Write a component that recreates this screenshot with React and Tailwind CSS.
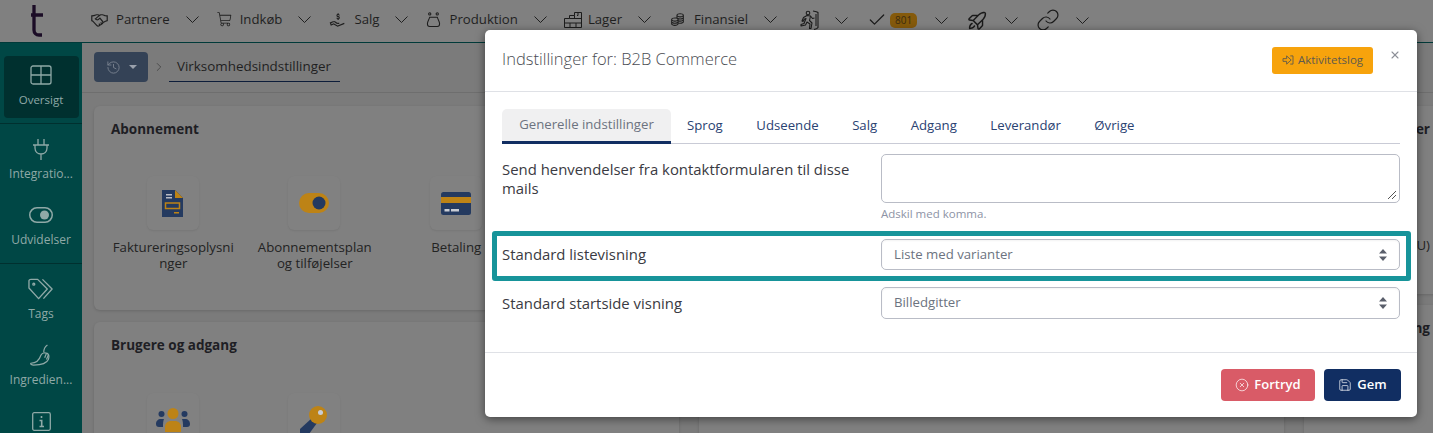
import React from 'react';
import { ChevronRight, Check, Link, History, Save, CircleX, X } from 'lucide-react';
import { LiaHandshake, LiaHandHoldingUsdSolid, LiaCoinsSolid } from 'react-icons/lia';
import { PiShoppingCartLight, PiRocketLaunch } from 'react-icons/pi';

const sans = 'font-["Open_Sans",sans-serif]';

const Pot = () => (
  <svg viewBox="0 0 16 17" className="w-[15px] h-[16px]" fill="none" stroke="#1c1c1c" strokeWidth="1.100">
    <circle cx="4" cy="2" r="1.200" />
    <circle cx="12" cy="2" r="1.200" />
    <path d="M4 5.500h8c1 3 2.500 4.500 2.500 7 0 2-1 3-2.500 3H4c-1.500 0-2.500-1-2.500-3 0-2.500 1.500-4 2.500-7z" />
  </svg>
);

const Warehouse = () => (
  <svg viewBox="0 0 18 16" className="w-[18px] h-[16px]" fill="none" stroke="#1c1c1c" strokeWidth="1">
    <path d="M.5 15.500V6.500h5v-3h5V.5h7v15zM.5 11h17M5.500 6.500h12M6 11v4.500M10.500 3.500v3M12 11v4.500M14 .5v3h-1" />
  </svg>
);

const Runner = () => (
  <svg viewBox="0 0 21 20" className="w-[21px] h-[20px]" fill="none" stroke="#1c1c1c" strokeWidth="1.100" strokeLinejoin="round">
    <circle cx="10" cy="3" r="1.800" />
    <path d="M5.500 7.500l3.500-2 3.500.5-1 4.500 2.500 2.500-1 5.500h-1.500l.5-4.500-3-2-1.500 3-4.500 1v-1.500l3-1 2-5-1.500.5-1.500 2.500-1-.5z" />
    <path d="M12.500 6l2 2.500 2-.5" />
    <path d="M15 1c3 .5 4.500 1 5 1.500v15c-.5 1-2 1.500-4 2" />
    <path d="M18 4v12" />
  </svg>
);

const NavChevron = ({ mr = 'mr-[17px]' }) => (
  <svg viewBox="0 0 13 7" className={`ml-[16px] ${mr} w-[13px] h-[7px] shrink-0`} fill="none" stroke="#1f1f1f" strokeWidth="1">
    <path d="M.5 .5l6 6 6-6" />
  </svg>
);

const NavItem = ({ icon, label, gap = 'ml-[7px]', ml = '', mr, children }) => (
  <div className={`flex items-center shrink-0 ${ml}`}>
    {icon}
    {label && <span className={`${gap} text-[13.200px] text-[#1f1f1f]`}>{label}</span>}
    {children}
    <NavChevron mr={mr} />
  </div>
);

const SideItem = ({ icon, label, divider }) => (
  <div className={`h-[66px] pt-[13px] flex flex-col items-center ${divider ? 'h-[74px] border-b border-[#00302f]' : ''}`}>
    <div className="h-[24px] flex items-center justify-center">{icon}</div>
    <span className="mt-[5px] text-[12px] leading-[16px] text-[#8fa9a7] whitespace-nowrap">{label}</span>
  </div>
);

const CardTile = ({ icon, children }) => (
  <div className="w-[141.500px] shrink-0 flex flex-col items-center">
    <div className="w-[52px] h-[54px] rounded-[6px] bg-[#818181] shadow-[0_1px_2px_rgba(0,0,0,0.08)] flex items-center justify-center">
      {icon}
    </div>
    <p className="mt-[9px] ml-[1px] w-[125px] text-center text-[13.250px] leading-[16px] text-[#232323] break-words">{children}</p>
  </div>
);

const Card = ({ height = 'h-[203px]', title, children }) => (
  <div className={`${height} rounded-[6px] bg-[#808080] shadow-[0_1px_3px_rgba(0,0,0,0.15)] px-[17px] pt-[14px] overflow-hidden`}>
    <h3 className="text-[13.500px] font-bold leading-[19px] text-[#1e1e24] whitespace-nowrap">{title}</h3>
    <div className="mt-[37px] flex -ml-[9px]">{children}</div>
  </div>
);

const InvoiceIcon = () => (
  <svg viewBox="0 0 21 27" className="w-[21px] h-[27px]">
    <path d="M0 0h13l8 8v19H0z" fill="#243a60" />
    <path d="M13 0l8 8h-8z" fill="#bd8316" />
    <path d="M4 4h6v1.500H4zM4 7h6v1.500H4z" fill="#b9bcc5" />
    <rect x="3.500" y="13" width="14" height="5.500" fill="none" stroke="#bd8316" strokeWidth="1.500" />
    <path d="M12 22h5v1.500h-5z" fill="#bd8316" />
  </svg>
);

const ToggleIcon = () => (
  <svg viewBox="0 0 30 20" className="w-[30px] h-[20px]">
    <rect width="30" height="20" rx="10" fill="#bd8316" />
    <circle cx="20" cy="10" r="6.500" fill="#243a60" />
  </svg>
);

const BankCardIcon = () => (
  <svg viewBox="0 0 30 23" className="w-[30px] h-[23px]">
    <rect width="30" height="23" rx="2.500" fill="#243a60" />
    <rect y="5" width="30" height="6" fill="#bd8316" />
    <path d="M3.500 17h5v2.500h-5zM10 17h8v2.500h-8z" fill="#c8ccd4" />
  </svg>
);

const TeamIcon = () => (
  <svg viewBox="0 0 34 24" className="w-[34px] h-[24px]">
    <circle cx="5.500" cy="6" r="3" fill="#243a60" />
    <circle cx="28.500" cy="6" r="3" fill="#243a60" />
    <path d="M0 16c0-3 2-5 5-5h3c-1 2-1 5-1 8H3c-2 0-3-1-3-3zM34 16c0-3-2-5-5-5h-3c1 2 1 5 1 8h4c2 0 3-1 3-3z" fill="#243a60" />
    <circle cx="17" cy="5.500" r="5.500" fill="#bd8316" />
    <path d="M9 24v-5c0-4 3-6 6-6h4c3 0 6 2 6 6v5z" fill="#bd8316" />
  </svg>
);

const KeyIcon = () => (
  <svg viewBox="0 0 28 28" className="w-[28px] h-[28px]">
    <path d="M0 28v-5l12-11 5 5L9 28z" fill="#243a60" />
    <circle cx="18" cy="9" r="9" fill="#bd8316" />
    <circle cx="20.500" cy="6.500" r="2.500" fill="#c8ccd4" />
  </svg>
);

const PlugIcon = () => (
  <svg viewBox="0 0 16 21" className="w-[16px] h-[21px]" fill="none" stroke="#8fa9a7" strokeWidth="1.300">
    <path d="M5 0v6M11 0v6M0 6h16M2 6v3c0 4 3 6 6 6s6-2 6-6V6M8 15v6" />
  </svg>
);

const ToggleOutline = () => (
  <svg viewBox="0 0 24 16" className="w-[24px] h-[16px]">
    <rect x=".75" y=".75" width="22.500" height="14.500" rx="7.250" fill="none" stroke="#8fa9a7" strokeWidth="1.500" />
    <circle cx="15.500" cy="8" r="4.500" fill="#8fa9a7" />
  </svg>
);

const TagsIcon = () => (
  <svg viewBox="0 0 28 22" className="w-[27px] h-[22px]" fill="none" stroke="#8fa9a7" strokeWidth="1.400" strokeLinejoin="round">
    <path d="M1 2.500C1 1.500 2 1 3 1h7l10 10-9 10L1 10z" />
    <circle cx="6" cy="6" r="1" />
    <path d="M15 1l10 10-9 10" />
  </svg>
);

const Chili = () => (
  <svg viewBox="0 0 24 24" className="w-[22px] h-[22px]" fill="none" stroke="#8fa9a7" strokeWidth="1.300" strokeLinejoin="round">
    <path d="M1 21c5 0 9-3 11-9 1-2 4-3 6-2 3 1 3 4 2 7-2 5-9 6-16 6-2 0-4-1-3-2z" />
    <path d="M15 9c0-3 1-6 4-8M18 10l-2 5M20 12l-2 5" />
  </svg>
);

const InfoIcon = () => (
  <svg viewBox="0 0 19 19" className="w-[19px] h-[19px]" fill="none" stroke="#8fa9a7" strokeWidth="1.300">
    <rect x=".7" y=".7" width="17.600" height="17.600" rx="1.500" />
    <path d="M9.500 4v2M7.500 8.500h2.200V14M7.500 14.500h4.500" strokeWidth="1.600" />
  </svg>
);

const SelectBox = ({ value, h }) => (
  <div className={`w-[519px] ${h} rounded-[5px] border border-[#b9bcc6] flex items-center justify-between pl-[12px] pr-[12px] shadow-[inset_0_1px_2px_rgba(0,0,0,0.05)]`}>
    <span className="text-[13.200px] text-[#6c7380]">{value}</span>
    <svg viewBox="0 0 8 12" className="w-[8px] h-[12px]" fill="#5a5f6b">
      <path d="M4 0l4 4.500H0zM4 12L0 7.500h8z" />
    </svg>
  </div>
);

const tabs = ['Sprog', 'Udseende', 'Salg', 'Adgang', 'Leverandør', 'Øvrige'];

const App = () => {
  return (
    <div className={`relative w-[1433px] h-[433px] overflow-hidden bg-[#7b7b7b] ${sans}`}>
      <header className="h-[43px] pb-[2px] bg-[#808080] border-b border-[#003a39] flex items-center">
        <div className="w-[90px] shrink-0 pl-[31px]">
          <svg viewBox="0 0 14 32" className="w-[14px] h-[32px] mt-[2px]" fill="none" stroke="#1b0c26" strokeWidth="3.300">
            <path d="M3 0v25c0 3 2 5 5 5h3M0 10h12" />
          </svg>
        </div>
        <NavItem icon={<LiaHandshake className="w-[19px] h-[19px] text-[#1f1f1f]" />} label="Partnere" />
        <NavItem icon={<PiShoppingCartLight className="w-[17px] h-[17px] text-[#1f1f1f]" />} label="Indkøb" gap="ml-[7px]" />
        <NavItem icon={<LiaHandHoldingUsdSolid className="w-[18px] h-[18px] text-[#1f1f1f]" />} label="Salg" gap="ml-[8px]" />
        <NavItem icon={<Pot />} label="Produktion" gap="ml-[8px]" ml="ml-[1px]" />
        <NavItem icon={<Warehouse />} label="Lager" gap="ml-[6px]" />
        <NavItem icon={<LiaCoinsSolid className="w-[17px] h-[17px] text-[#1f1f1f]" />} label="Finansiel" gap="ml-[8px]" ml="ml-[1px]" />
        <NavItem icon={<Runner />} ml="ml-[4px]" mr="mr-[19px]" />
        <NavItem icon={<Check className="w-[20px] h-[20px] text-[#1a1a1a]" strokeWidth={1.500} />}>
          <span className="ml-[3px] mr-[2px] w-[27px] text-center h-[15px] rounded-[5px] bg-[#855a0b] text-[10px] leading-[15px] text-[#3a2b10]">801</span>
        </NavItem>
        <NavItem icon={<PiRocketLaunch className="w-[23px] h-[23px] text-[#1a1a1a]" />} ml="ml-[1px]" />
        <NavItem icon={<Link className="w-[24px] h-[24px] text-[#1a1a1a]" strokeWidth={1.200} />} ml="ml-[1px]" />
      </header>

      <div className="flex h-[390px]">
        <aside className="w-[82px] shrink-0 bg-[#004745]">
          <div className="pt-[13px] pb-[5px] border-b border-[#00302f] flex justify-center">
            <div className="w-[75px] h-[62px] rounded-[4px] bg-[#00302f] pt-[7px] flex flex-col items-center">
              <div className="h-[24px] flex items-center justify-center">
                <svg viewBox="0 0 22 20" className="w-[22px] h-[20px]" fill="none" stroke="#8fa9a7" strokeWidth="1.300">
                  <rect x="1" y="1" width="20" height="18" rx="2" />
                  <path d="M11 1v18M1 10h20" />
                </svg>
              </div>
              <span className="mt-[5px] text-[11.500px] leading-[16px] text-[#8fa9a7]">Oversigt</span>
            </div>
          </div>
          <SideItem label="Integratio..." icon={<PlugIcon />} />
          <SideItem label="Udvidelser" icon={<ToggleOutline />} divider />
          <SideItem label="Tags" icon={<TagsIcon />} />
          <SideItem label="Ingredien..." icon={<Chili />} />
          <SideItem icon={<InfoIcon />} />
        </aside>

        <main className="flex-1 min-w-0">
          <div className="h-[50px] border-b border-[#6e6e6e] pl-[12px] pt-[9px] flex items-start">
            <div className="w-[54px] h-[30px] rounded-[4px] bg-[#344256] flex items-center justify-center gap-[8px]">
              <History className="w-[15px] h-[15px] text-[#77808e]" strokeWidth={1.500} />
              <span className="w-0 h-0 border-x-[4px] border-x-transparent border-t-[4px] border-t-[#9aa1ac]" />
            </div>
            <ChevronRight className="ml-[4px] mt-[8px] w-[14px] h-[14px] text-[#2b2b2b]" strokeWidth={1} />
            <div className="ml-[3px] w-[171px] h-[30px] border-b border-[#0d1d3a] pl-[8px] text-[13.400px] leading-[28px] text-[#1f1f1f] whitespace-nowrap">
              Virksomhedsindstillinger
            </div>
          </div>
          <div className="pl-[12px] pt-[13px] flex gap-x-[20px]">
            <div className="w-[585px] shrink-0 flex flex-col gap-[12px]">
              <Card height="h-[204px]" title="Abonnement">
                <CardTile icon={<InvoiceIcon />}>Faktureringsoplysninger</CardTile>
                <CardTile icon={<ToggleIcon />}>Abonnementsplan og tilføjelser</CardTile>
                <CardTile icon={<BankCardIcon />}>Betaling</CardTile>
              </Card>
              <Card title="Brugere og adgang">
                <div className="pt-[1px] flex">
                  <CardTile icon={<TeamIcon />} />
                  <CardTile icon={<KeyIcon />} />
                </div>
              </Card>
            </div>
            <div className="w-[585px] shrink-0 flex flex-col gap-[12px]">
              <Card height="h-[204px]" />
              <Card />
            </div>
            <div className="w-[200px] shrink-0 flex flex-col gap-[11px]">
              <Card height="h-[188px]" title={<span className="block w-[109px] text-right">Leverandører</span>}>
                <p className="ml-[9px] mt-[61px] w-[109px] text-right text-[13.250px] leading-[16px] text-[#232323] whitespace-nowrap">Moms (EU)</p>
              </Card>
              <Card title={<span className="block w-[109px] text-right">Opsætning</span>} />
            </div>
          </div>
        </main>
      </div>

      <section className="absolute left-[485px] top-[30px] w-[932px] h-[387px] rounded-[5px] bg-white shadow-[0_2px_10px_rgba(0,0,0,0.5)] flex flex-col">
        <div className="h-[62px] shrink-0 border-b border-[#dfe1e6] pl-[17px] pr-[16px] flex items-center justify-between">
          <h2 className="-mt-[2px] text-[16.500px] font-light text-[#4a4c52]">Indstillinger for: B2B Commerce</h2>
          <div className="flex items-start -mt-[1px]">
            <button className="w-[101px] h-[27px] rounded-[3px] bg-[#f7a30c] flex items-center justify-center gap-[4px] text-[11.500px] text-[#5f5a4c]">
              <svg viewBox="0 0 13 11" className="w-[12px] h-[10px]" fill="none" stroke="#5f5a4c" strokeWidth="1">
                <path d="M1 4h4V1l5 4.500L5 10V7H1zM9 1h3v9H9" />
              </svg>
              Aktivitetslog
            </button>
            <X className="ml-[16px] -mt-[3px] w-[12px] h-[22px] text-[#8d9098]" strokeWidth={2.200} />
          </div>
        </div>

        <div className="flex-1 px-[17px] pt-[17px]">
          <div className="h-[35px] border-b border-[#c9cbd6] flex items-stretch">
            <div className="w-[169px] h-[35px] rounded-t-[5px] bg-[#f0f0f1] border-b-[3px] border-[#112e62] flex items-center justify-center text-[13.200px] text-[#6c7380]">
              Generelle indstillinger
            </div>
            <div className="flex gap-[33.500px] pl-[16px] h-[34px] items-center text-[13.200px] text-[#2a4272]">
              {tabs.map((t) => (
                <span key={t}>{t}</span>
              ))}
            </div>
          </div>

          <div className="mt-[10px] flex">
            <p className="w-[379px] pr-[20px] pt-[6px] text-[14.900px] leading-[19px] text-[#3a3a42]">
              Send henvendelser fra kontaktformularen til disse mails
            </p>
            <div>
              <div className="relative w-[519px] h-[49px] rounded-[5px] border border-[#b9bcc6]">
                <svg viewBox="0 0 10 10" className="absolute right-[2px] bottom-[2px] w-[10px] h-[10px]" stroke="#555" strokeWidth="1">
                  <path d="M1 9l8-8M5 9l4-4" />
                </svg>
              </div>
              <p className="mt-[4px] text-[11.500px] leading-[14px] text-[#8d93a5]">Adskil med komma.</p>
            </div>
          </div>

          <div className="mt-[18px] flex items-center h-[31px]">
            <label className="w-[379px] text-[14.900px] text-[#3a3a42]">Standard listevisning</label>
            <SelectBox value="Liste med varianter" h="h-[31px]" />
          </div>
          <div className="mt-[17px] flex items-center h-[32px]">
            <label className="w-[379px] text-[14.900px] text-[#3a3a42]">Standard startside visning</label>
            <SelectBox value="Billedgitter" h="h-[32px]" />
          </div>
        </div>

        <div className="h-[65px] shrink-0 border-t border-[#dfe1e6] pr-[16px] flex items-center justify-end gap-[9px]">
          <button className="w-[94px] h-[32px] rounded-[4px] bg-[#d95b67] flex items-center justify-center gap-[5px] text-[13px] font-semibold text-white">
            <CircleX className="w-[14px] h-[14px]" strokeWidth={1.200} />
            Fortryd
          </button>
          <button className="w-[77px] h-[32px] rounded-[4px] bg-[#112e62] flex items-center justify-center gap-[5px] text-[13px] font-semibold text-white">
            <Save className="w-[14px] h-[14px]" strokeWidth={1.200} />
            Gem
          </button>
        </div>
      </section>

      {/* markering af rækken */}
      <div className="absolute left-[492px] top-[231px] w-[919px] h-[50px] rounded-[3px] border-[5px] border-[#17949a] pointer-events-none" />
    </div>
  );
};

export default App;
